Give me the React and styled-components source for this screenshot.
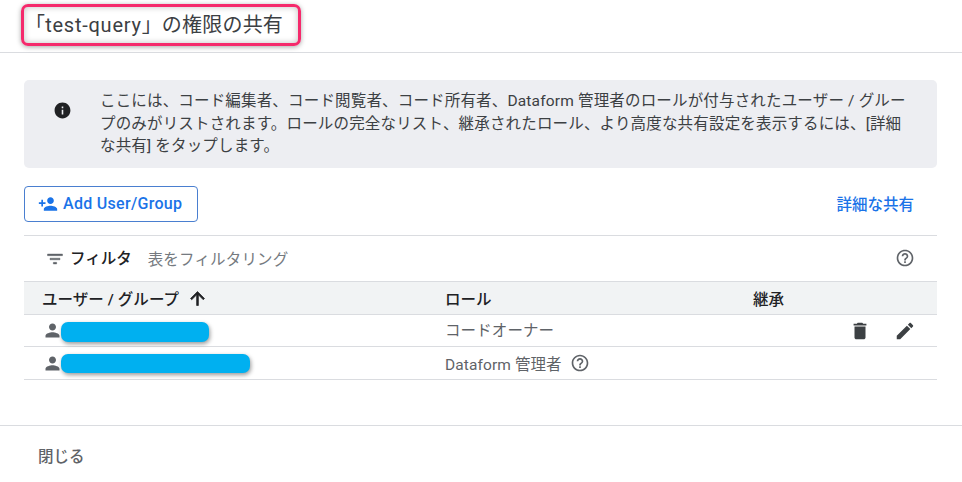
import React from "react";
import styled, { createGlobalStyle } from "styled-components";

const Global = createGlobalStyle`
  html, body { margin: 0; padding: 0; background: #fff; }
  body { font-family: Roboto, "Noto Sans CJK JP", sans-serif; color: #3c4043; overflow: hidden; }
  * { box-sizing: border-box; }
`;
const Page = styled.div`width: 962px; height: 482px; display: flex; flex-direction: column;`;
const Header = styled.header`
  height: 53px; border-bottom: 1px solid #dadce0; padding: 4px 0 0 21px; flex: none;
`;
const TitleMark = styled.div`
  display: inline-flex; align-items: center; width: 280px; height: 42px; padding: 0 0 4px 1px;
  border: 3px solid #f52a6c; border-radius: 7px;
  box-shadow: 0 1px 5px rgba(0,0,0,.35), inset 0 0 6px rgba(0,0,0,.25);
`;
const Title = styled.h1`
  margin: 0; font-size: 20px; font-weight: 400; color: #3c4043; white-space: nowrap; letter-spacing: .2px;
`;
const TitleName = styled.span`letter-spacing: .75px;`;
const Content = styled.main`flex: none; height: 373px; padding: 27px 25px 0 24px; border-bottom: 1px solid #dadce0;`;
const Notice = styled.section`
  height: 88px; background: #edeef2; border-radius: 5px; display: flex; align-items: flex-start;
  padding: 10px 20px 0 29px;
`;
const NoticeIcon = styled.svg`width: 19px; height: 19px; margin: 11px 28px 0 0; flex: none; fill: #202124;`;
const NoticeText = styled.p`
  margin: 0; font-size: 15.5px; line-height: 22.5px; letter-spacing: .17px; color: #3c4043; white-space: nowrap;
`;
const Actions = styled.div`
  display: flex; align-items: center; justify-content: space-between; height: 36px; margin-top: 18px;
`;
const AddButton = styled.button`
  width: 174px; height: 36px; display: flex; align-items: center; gap: 5px; padding: 0 0 1px 13px;
  background: #fff; border: 1px solid #4a7fd0; border-radius: 4px; color: #1a73e8;
  font: 500 16px Roboto, "Noto Sans CJK JP", sans-serif; letter-spacing: .3px;
`;
const AddIcon = styled.svg`width: 20px; height: 20px; fill: #1a73e8; flex: none;`;
const LinkButton = styled.a`
  color: #1a73e8; font-size: 15.5px; font-weight: 500; margin: -3px 23px 0 0; letter-spacing: 0;
`;
const FilterBar = styled.div`
  margin-top: 13px; height: 46px; border-top: 1px solid #dadce0; display: flex; align-items: center;
  padding: 0 22px 2px 21px;
`;
const FilterIcon = styled.svg`width: 20px; height: 20px; fill: #5f6368; flex: none; margin: 2px 5px 0 0; stroke: #5f6368; stroke-width: .5;`;
const FilterLabel = styled.span`font-size: 15.5px; font-weight: 500; color: #202124; margin: -2px 16px 0 0; letter-spacing: 0;`;
const FilterHint = styled.span`font-size: 15.5px; color: #757a80; flex: 1; letter-spacing: .17px;`;
const HelpIcon = styled.svg`
  width: ${p => p.$size || 20}px; height: ${p => p.$size || 20}px; fill: #5f6368; flex: none;
`;
const Table = styled.div`width: 100%;`;
const Row = styled.div`
  display: grid; grid-template-columns: 403px 308px 1fr; align-items: center;
  border-bottom: 1px solid #dadce0;
  height: ${p => p.$h}px;
`;
const HeadRow = styled(Row)`background: #f1f3f4; border-top: 1px solid #dadce0; font-size: 15.5px; font-weight: 500; color: #202124;`;
const HeadCell = styled.div`display: flex; align-items: center; letter-spacing: .05px; padding-left: ${p => p.$pad || 0}px;`;
const ArrowIcon = styled.svg`width: 21px; height: 21px; fill: #202124; stroke: #202124; stroke-width: .8; margin-left: 8px;`;
const UserCell = styled.div`display: flex; align-items: center; padding-left: 18px;`;
const PersonIcon = styled.svg`width: 21px; height: 21px; fill: #5f6368; flex: none; margin-right: -2px;`;
const Redaction = styled.span`
  display: block; height: ${p => p.$h}px; width: ${p => p.$w}px; margin-top: ${p => p.$top}px;
  background: #00b0f0; border-radius: 7px;
  box-shadow: 1px 2px 4px rgba(0,0,0,.4);
`;
const RoleCell = styled.div`
  display: flex; align-items: center; gap: 8px; padding-left: 18px; font-size: 15.5px; color: #5f6368; letter-spacing: .1px;
  margin-top: ${p => p.$top || 0}px;
`;
const ToolsCell = styled.div`display: flex; justify-content: flex-end; align-items: center; gap: 23px; padding-right: 21px;`;
const ToolIcon = styled.svg`width: 22px; height: 22px; fill: #3c4043; flex: none;`;
const Footer = styled.footer`padding: 18px 0 0 38px; font-size: 15.5px; color: #5f6368; letter-spacing: 0; font-weight: 500;`;

const help = "M11 18h2v-2h-2v2zm1-16C6.48 2 2 6.48 2 12s4.48 10 10 10 10-4.48 10-10S17.52 2 12 2zm0 18c-4.41 0-8-3.59-8-8s3.59-8 8-8 8 3.59 8 8-3.59 8-8 8zm0-14c-2.21 0-4 1.79-4 4h2c0-1.1.9-2 2-2s2 .9 2 2c0 2-3 1.75-3 5h2c0-2.25 3-2.5 3-5 0-2.21-1.79-4-4-4z";
const person = "M12 12c2.21 0 4-1.79 4-4s-1.79-4-4-4-4 1.79-4 4 1.79 4 4 4zm0 2c-2.67 0-8 1.34-8 4v2h16v-2c0-2.66-5.33-4-8-4z";

export default function App() {
  return (
    <Page>
      <Global />
      <Header>
        <TitleMark><Title>「<TitleName>test-query</TitleName>」の権限の共有</Title></TitleMark>
      </Header>
      <Content>
        <Notice>
          <NoticeIcon viewBox="0 0 24 24"><path d="M12 2C6.48 2 2 6.48 2 12s4.48 10 10 10 10-4.48 10-10S17.52 2 12 2zm1 15h-2v-6h2v6zm0-8h-2V7h2v2z" /></NoticeIcon>
          <NoticeText>
            ここには、コード編集者、コード閲覧者、コード所有者、Dataform 管理者のロールが付与されたユーザー / グルー<br />
            プのみがリストされます。ロールの完全なリスト、継承されたロール、より高度な共有設定を表示するには、[詳細<br />
            な共有] をタップします。
          </NoticeText>
        </Notice>
        <Actions>
          <AddButton>
            <AddIcon viewBox="0 0 24 24"><path d="M15 12c2.21 0 4-1.79 4-4s-1.79-4-4-4-4 1.79-4 4 1.79 4 4 4zm-9-2V7H4v3H1v2h3v3h2v-3h3v-2H6zm9 4c-2.67 0-8 1.34-8 4v2h16v-2c0-2.66-5.33-4-8-4z" /></AddIcon>
            Add User/Group
          </AddButton>
          <LinkButton>詳細な共有</LinkButton>
        </Actions>
        <FilterBar>
          <FilterIcon viewBox="0 0 24 24"><path d="M10 18h4v-2h-4v2zM3 6v2h18V6H3zm3 7h12v-2H6v2z" /></FilterIcon>
          <FilterLabel>フィルタ</FilterLabel>
          <FilterHint>表をフィルタリング</FilterHint>
          <HelpIcon viewBox="0 0 24 24"><path d={help} /></HelpIcon>
        </FilterBar>
        <Table>
          <HeadRow $h={34}>
            <HeadCell $pad={18}>ユーザー / グループ<ArrowIcon viewBox="0 0 24 24"><path d="M4 12l1.41 1.41L11 7.83V20h2V7.83l5.58 5.59L20 12l-8-8-8 8z" /></ArrowIcon></HeadCell>
            <HeadCell $pad={18}>ロール</HeadCell>
            <HeadCell $pad={18}>継承</HeadCell>
          </HeadRow>
          <Row $h={32}>
            <UserCell><PersonIcon viewBox="0 0 24 24"><path d={person} /></PersonIcon><Redaction $w={148} $h={20} $top={2} /></UserCell>
            <RoleCell $top={-4}>コードオーナー</RoleCell>
            <ToolsCell>
              <ToolIcon viewBox="0 0 24 24"><path d="M6 19c0 1.1.9 2 2 2h8c1.1 0 2-.9 2-2V7H6v12zM19 4h-3.5l-1-1h-5l-1 1H5v2h14V4z" /></ToolIcon>
              <ToolIcon viewBox="0 0 24 24"><path d="M3 17.25V21h3.75L17.81 9.94l-3.75-3.75L3 17.25zM20.71 7.04c.39-.39.39-1.02 0-1.41l-2.34-2.34c-.39-.39-1.02-.39-1.41 0l-1.83 1.83 3.75 3.75 1.83-1.83z" /></ToolIcon>
            </ToolsCell>
          </Row>
          <Row $h={33}>
            <UserCell><PersonIcon viewBox="0 0 24 24"><path d={person} /></PersonIcon><Redaction $w={189} $h={19} $top={1} /></UserCell>
            <RoleCell>Dataform 管理者<HelpIcon $size={20} viewBox="0 0 24 24"><path d={help} /></HelpIcon></RoleCell>
            <div />
          </Row>
        </Table>
      </Content>
      <Footer>閉じる</Footer>
    </Page>
  );
}
